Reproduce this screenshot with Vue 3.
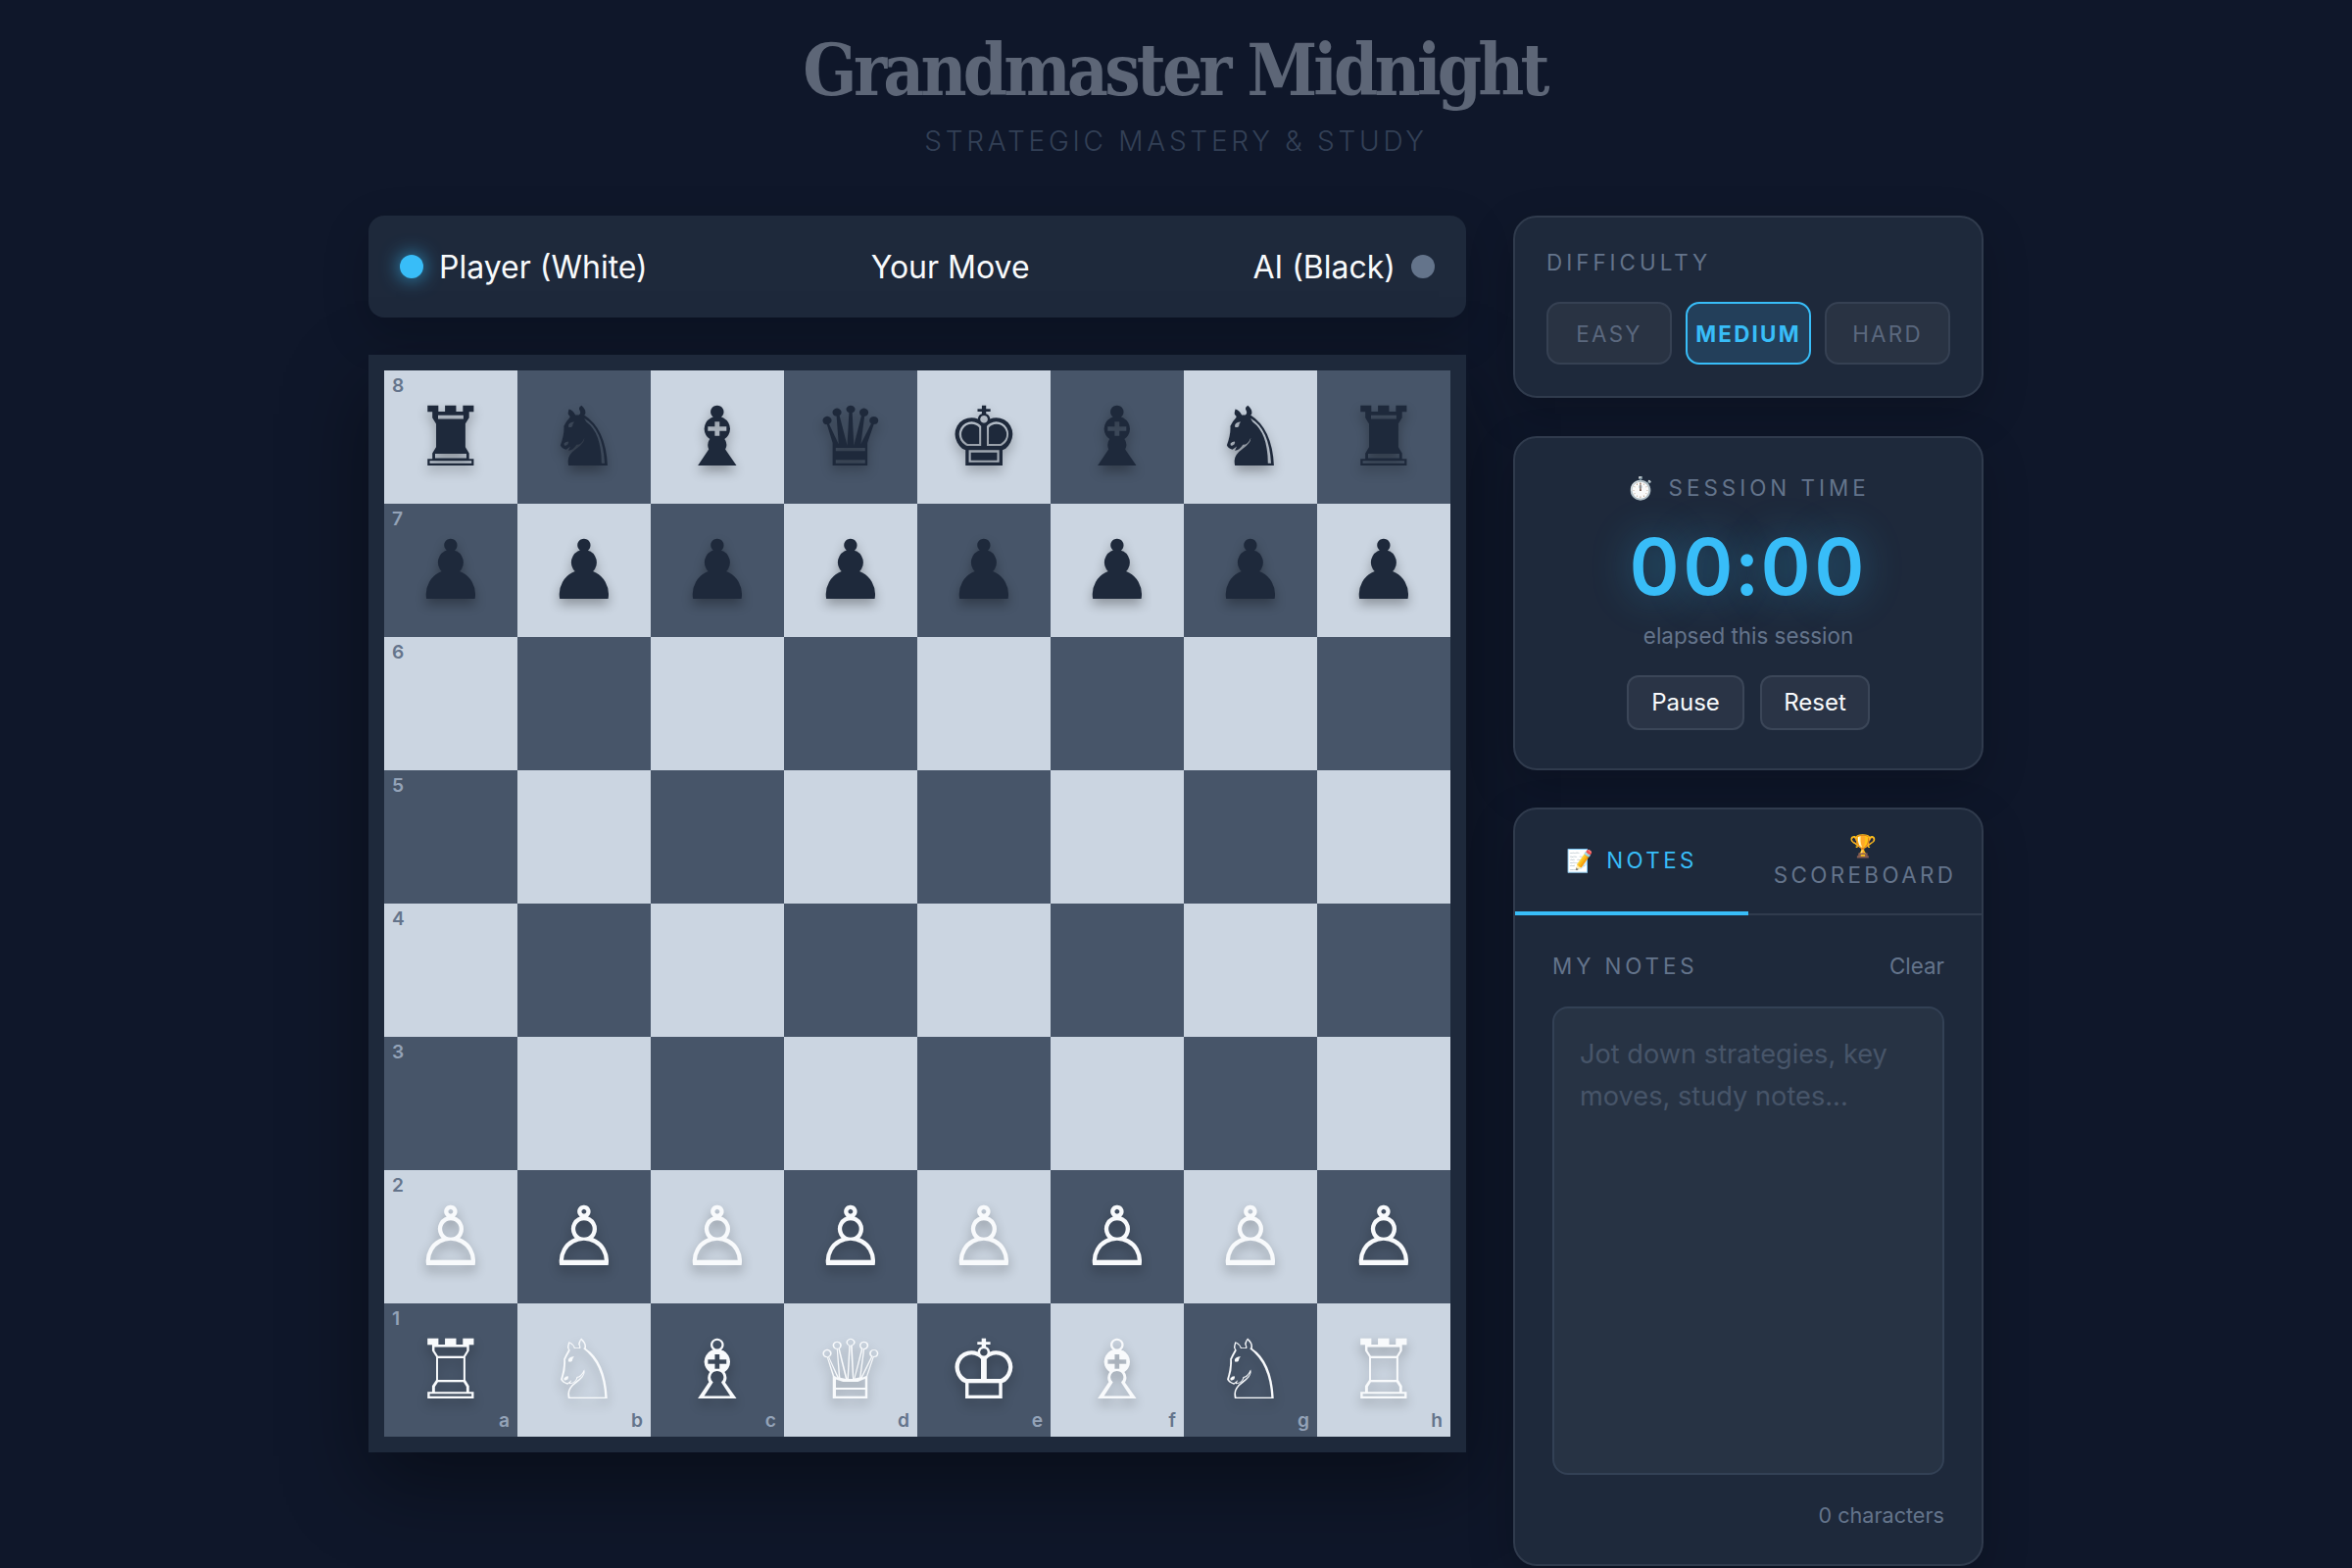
<script setup>
import { computed } from 'vue'

const back = ['r', 'n', 'b', 'q', 'k', 'b', 'n', 'r']
const glyphs = {
  r: ['♜', '♖'], n: ['♞', '♘'], b: ['♝', '♗'], q: ['♛', '♕'], k: ['♚', '♔'], p: ['♟', '♙']
}
const files = ['a', 'b', 'c', 'd', 'e', 'f', 'g', 'h']

const squares = computed(() => {
  const out = []
  for (let row = 0; row < 8; row++) {
    for (let col = 0; col < 8; col++) {
      let glyph = ''
      let side = ''
      if (row === 0) { glyph = glyphs[back[col]][0]; side = 'black' }
      if (row === 1) { glyph = glyphs.p[0]; side = 'black' }
      if (row === 6) { glyph = glyphs.p[1]; side = 'white' }
      if (row === 7) { glyph = glyphs[back[col]][1]; side = 'white' }
      out.push({
        id: files[col] + (8 - row),
        dark: (row + col) % 2 === 1,
        glyph,
        side,
        rank: col === 0 ? String(8 - row) : '',
        file: row === 7 ? files[col] : ''
      })
    }
  }
  return out
})
</script>

<template>
  <div class="page">
    <header class="header">
      <h1 class="title">Grandmaster Midnight</h1>
      <p class="subtitle">STRATEGIC MASTERY &amp; STUDY</p>
    </header>

    <main class="layout">
      <section class="play">
        <div class="status">
          <div class="who">
            <span class="dot on"></span>
            <span>Player (White)</span>
          </div>
          <div>Your Move</div>
          <div class="who">
            <span>AI (Black)</span>
            <span class="dot"></span>
          </div>
        </div>

        <div class="board">
          <div class="grid">
            <div
              v-for="s in squares"
              :key="s.id"
              class="square"
              :class="s.dark ? 'dark' : 'light'"
            >
              <span v-if="s.rank" class="rank">{{ s.rank }}</span>
              <span v-if="s.glyph" class="piece" :class="s.side">{{ s.glyph }}</span>
              <span v-if="s.file" class="file">{{ s.file }}</span>
            </div>
          </div>
        </div>
      </section>

      <aside class="side">
        <section class="card difficulty">
          <div class="label">DIFFICULTY</div>
          <div class="levels">
            <button class="level">EASY</button>
            <button class="level active">MEDIUM</button>
            <button class="level">HARD</button>
          </div>
        </section>

        <section class="card timer">
          <div class="timer-label"><span class="emoji">⏱️</span> SESSION TIME</div>
          <div class="time">00:00</div>
          <div class="elapsed">elapsed this session</div>
          <div class="timer-actions">
            <button class="action pause">Pause</button>
            <button class="action reset">Reset</button>
          </div>
        </section>

        <section class="card notes">
          <div class="tabs">
            <button class="tab active"><span class="emoji">📝</span> NOTES</button>
            <button class="tab"><span class="emoji">🏆</span> SCOREBOARD</button>
          </div>
          <div class="notes-body">
            <div class="notes-head">
              <span class="notes-title">MY NOTES</span>
              <span class="clear">Clear</span>
            </div>
            <textarea class="notes-input" placeholder="Jot down strategies, key moves, study notes..."></textarea>
            <div class="count">0 characters</div>
          </div>
        </section>
      </aside>
    </main>
  </div>
</template>

<style>
html, body { margin: 0; background: #0f172a; }
</style>

<style scoped>
.page {
  box-sizing: border-box;
  background: #0f172a;
  font-family: "Inter", "Noto Color Emoji", sans-serif;
  color: #f8fafc;
  overflow: hidden;
  height: 1600px;
}
.header { text-align: center; padding-top: 28px; height: 220px; box-sizing: border-box; }
.title {
  margin: 0;
  padding-right: 3px;
  font-family: "DejaVu Serif Condensed", "DejaVu Serif", serif;
  font-size: 72px;
  line-height: 88px;
  font-weight: 700;
  letter-spacing: -3.8px;
  color: #5d6677;
}
.subtitle {
  margin: 10px 0 0;
  font-size: 28px;
  line-height: 36px;
  letter-spacing: 3.75px;
  font-weight: 300;
  color: #334056;
}
.layout {
  display: flex;
  justify-content: center;
  gap: 48px;
  align-items: flex-start;
}
.play { width: 1120px; display: flex; flex-direction: column; gap: 38px; }
.status {
  height: 104px;
  box-sizing: border-box;
  padding: 0 32px;
  border-radius: 16px;
  background: #1e293b;
  box-shadow: 0 16px 48px rgba(0, 0, 0, 0.2);
  display: flex;
  align-items: center;
  justify-content: space-between;
  font-size: 32px;
  color: #f8fafc;
}
.who { display: flex; align-items: center; gap: 16px; }
.dot { width: 24px; height: 24px; border-radius: 50%; background: #64748b; }
.dot.on { background: #38bdf8; box-shadow: 0 0 20px rgba(56, 189, 248, 0.8); }

.board {
  padding: 16px;
  background: #1e293b;
  box-shadow: 0 32px 80px rgba(0, 0, 0, 0.4);
}
.grid { display: grid; grid-template-columns: repeat(8, 136px); grid-auto-rows: 136px; }
.square { position: relative; display: flex; align-items: center; justify-content: center; }
.light { background: #cbd5e1; }
.dark { background: #475569; }
.piece {
  font-family: "DejaVu Sans", sans-serif;
  font-size: 84px;
  line-height: 1;
  text-shadow: 0 6px 12px rgba(0, 0, 0, 0.3);
}
.piece.black { color: #1e293b; }
.piece.white { color: #f8fafc; }
.rank, .file {
  position: absolute;
  font-size: 19.2px;
  line-height: 22px;
  font-weight: 600;
}
.rank { top: 4px; left: 8px; }
.file { bottom: 6px; right: 8px; }
.light .rank, .light .file { color: #64748b; }
.dark .rank, .dark .file { color: #94a3b8; }

.side { width: 480px; display: flex; flex-direction: column; gap: 38.4px; }
.card {
  box-sizing: border-box;
  background: #1e293b;
  border: 2px solid #303b4d;
  border-radius: 24px;
  box-shadow: 0 16px 48px rgba(0, 0, 0, 0.2);
}
.difficulty { height: 186.4px; padding: 32px; }
.label {
  font-size: 22.4px;
  line-height: 28px;
  letter-spacing: 4px;
  color: #64748b;
}
.levels { margin-top: 26px; display: grid; grid-template-columns: repeat(3, 1fr); gap: 14px; }
button { font-family: inherit; cursor: pointer; }
.level {
  height: 64px;
  padding: 0;
  border: 2px solid #364153;
  border-radius: 14px;
  background: #293343;
  color: #5b687e;
  font-size: 22.4px;
  letter-spacing: 2.24px;
}
.level.active {
  border-color: #38bdf8;
  background: #233f5a;
  color: #38bdf8;
  font-weight: 700;
}
.timer { height: 340.8px; padding: 37px 32px 0; text-align: center; }
.timer-label {
  font-size: 22.4px;
  line-height: 28px;
  letter-spacing: 4px;
  color: #64748b;
}
.time {
  margin-top: 16px;
  font-size: 80px;
  line-height: 100px;
  font-weight: 600;
  font-variant-numeric: tabular-nums;
  letter-spacing: 3px;
  color: #38bdf8;
  text-shadow: 0 0 40px rgba(56, 189, 248, 0.4);
}
.elapsed { margin-top: 5px; font-size: 22.4px; line-height: 32px; color: #64748b; }
.timer-actions { margin-top: 24px; display: flex; justify-content: center; gap: 16px; }
.action {
  height: 56px;
  border: 2px solid #3b4658;
  border-radius: 12px;
  background: #2a3446;
  color: #f8fafc;
  font-size: 24px;
  padding: 0;
}
.pause { width: 120px; }
.reset { width: 112px; }

.notes { height: 774px; overflow: hidden; }
.tabs { display: flex; height: 108px; border-bottom: 2px solid #303b4d; box-sizing: border-box; }
.tab {
  flex: 1;
  min-width: 0;
  border: 0;
  background: none;
  padding: 0 20px;
  margin-bottom: -2px;
  border-bottom: 4px solid transparent;
  color: #64748b;
  font-size: 22.4px;
  line-height: 30px;
  letter-spacing: 3.4px;
}
.tab.active { color: #38bdf8; border-bottom-color: #38bdf8; }
.notes-body { padding: 36px 38px 0; }
.notes-head { display: flex; justify-content: space-between; align-items: center; line-height: 32px; }
.notes-title { font-size: 22.4px; letter-spacing: 3.9px; color: #64748b; }
.clear { font-size: 22.4px; color: #64748b; }
.notes-input {
  display: block;
  box-sizing: border-box;
  width: 100%;
  height: 478px;
  margin-top: 25px;
  padding: 25px 26px;
  border: 2px solid #334155;
  border-radius: 16px;
  background: #273344;
  font-family: inherit;
  font-size: 27.2px;
  line-height: 43.5px;
  color: #f8fafc;
  resize: none;
  outline: none;
}
.notes-input::placeholder { color: #475569; opacity: 1; }
.count { margin-top: 26px; text-align: right; font-size: 21.6px; line-height: 30px; color: #64748b; }
</style>
